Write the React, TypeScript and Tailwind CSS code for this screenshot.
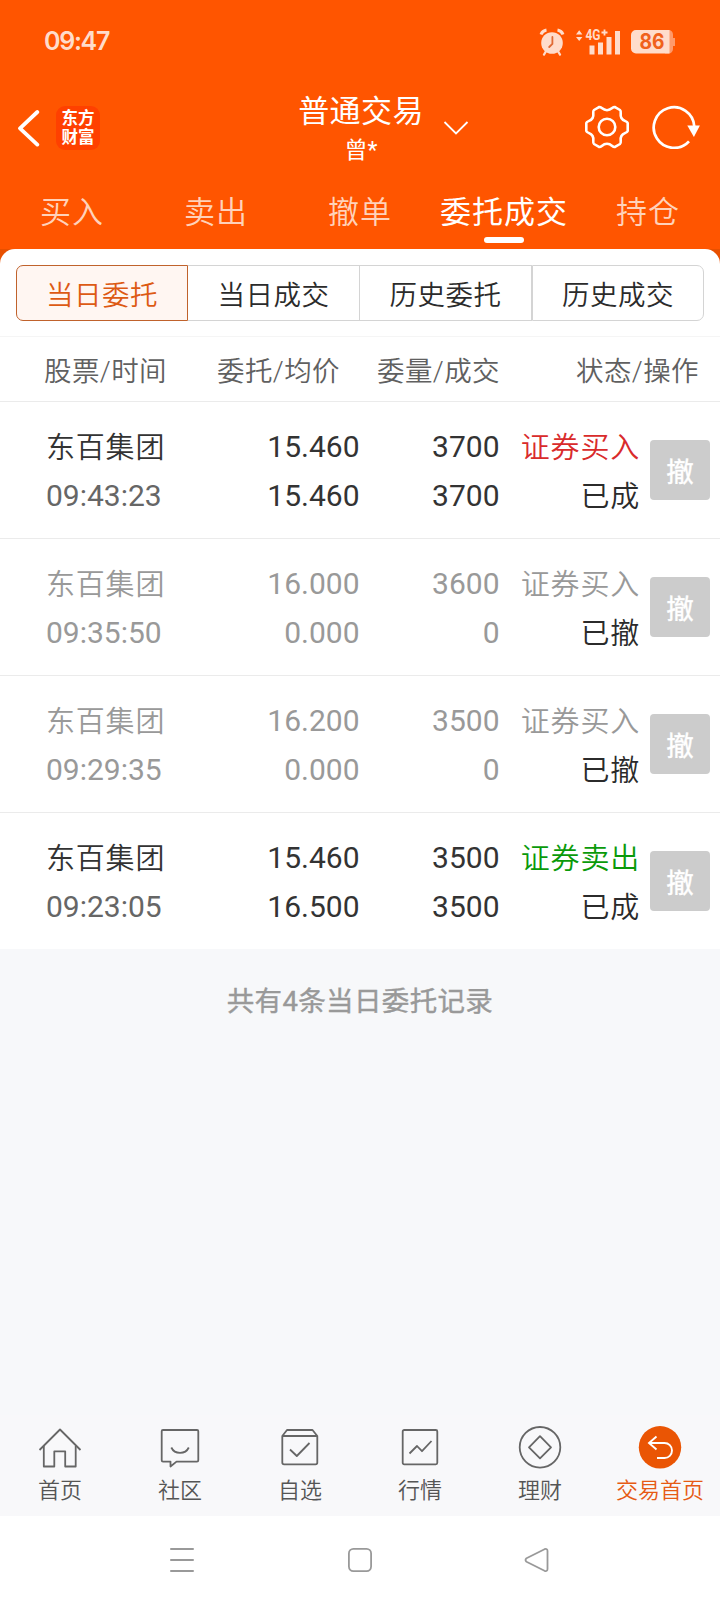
import React from "react";

const tabs = ["买入", "卖出", "撤单", "委托成交", "持仓"];
const segments = ["当日委托", "当日成交", "历史委托", "历史成交"];

type Order = {
  name: string;
  time: string;
  price: string;
  avg: string;
  qty: string;
  filled: string;
  side: string;
  sideClass: string;
  status: string;
  cancelled: boolean;
};

const orders: Order[] = [
  { name: "东百集团", time: "09:43:23", price: "15.460", avg: "15.460", qty: "3700", filled: "3700", side: "证券买入", sideClass: "text-[#d92b2b]", status: "已成", cancelled: false },
  { name: "东百集团", time: "09:35:50", price: "16.000", avg: "0.000", qty: "3600", filled: "0", side: "证券买入", sideClass: "text-[#999999]", status: "已撤", cancelled: true },
  { name: "东百集团", time: "09:29:35", price: "16.200", avg: "0.000", qty: "3500", filled: "0", side: "证券买入", sideClass: "text-[#999999]", status: "已撤", cancelled: true },
  { name: "东百集团", time: "09:23:05", price: "15.460", avg: "16.500", qty: "3500", filled: "3500", side: "证券卖出", sideClass: "text-[#0a9a0a]", status: "已成", cancelled: false },
];

function StatusBar() {
  return (
    <div className="flex h-[81px] items-center justify-between pl-[44px] pr-[45px] text-[#ffdccb]">
      <span className="font-[Inter] text-[25px] leading-[30px] font-semibold tracking-[-1.300px]">09:47</span>
      <div className="flex items-center pt-[2px]">
        <svg width="26" height="28" viewBox="0 0 26 28" className="mr-[10px]">
          <circle cx="13" cy="15" r="10.8" fill="currentColor" />
          <path d="M2 6.500a7 7 0 0 1 5.500-4.500M24 6.500a7 7 0 0 0-5.500-4.500" stroke="currentColor" strokeWidth="3" fill="none" />
          <path d="M6.5 24l-1.5 2.6M19.5 24l1.5 2.6" stroke="currentColor" strokeWidth="2.2" strokeLinecap="round" />
          <path d="M13.4 9v6.8l-3.2 3.2" stroke="#e06a35" strokeWidth="1.8" fill="none" strokeLinecap="round" />
        </svg>
        <svg width="46" height="28" viewBox="0 0 46 28" className="mr-[10px]">
          <path d="M1 6.500L4.200 2.300l3.200 4.200zM1 8.900L4.200 13.100 7.400 8.900z" fill="currentColor" />
          <text x="10.500" y="11.800" fontFamily="Roboto" fontSize="14" fontWeight="700" fill="currentColor" textLength="15" lengthAdjust="spacingAndGlyphs">4G</text>
          <path d="M26.500 4.500h6M29.500 1.500v6" stroke="currentColor" strokeWidth="1.800" />
          <path d="M14.500 17.500h5v9h-5zM23 14.500h5v12h-5zM31.500 9h5v17.500h-5zM40 3h5v23.500h-5z" fill="currentColor" />
        </svg>
        <svg width="44" height="24" viewBox="0 0 44 24">
          <path d="M34 0h3.500a4.500 4.500 0 0 1 4.500 4.500V8h2v8h-2v3a4.500 4.500 0 0 1-4.500 4.500H34z" fill="#ff9a6b" />
          <path d="M5 0h33.500v23.500H5a5 5 0 0 1-5-5V5a5 5 0 0 1 5-5z" fill="currentColor" />
          <text x="21" y="19.300" textAnchor="middle" fontFamily="Inter" fontSize="21" fontWeight="700" fill="#f0611b" textLength="25" lengthAdjust="spacingAndGlyphs">86</text>
        </svg>
      </div>
    </div>
  );
}

function TitleBar() {
  return (
    <div className="flex h-[97px] items-start pt-[9px]">
      <div className="flex w-[290px] items-center pt-[16px] pl-[17px]">
        <svg width="23" height="38" viewBox="0 0 23 38" fill="none" stroke="#fff" strokeWidth="3.800" strokeLinecap="round" strokeLinejoin="round">
          <path d="M20.300 3L3 19.300 20.300 35.600" />
        </svg>
        <div className="ml-[16px] flex size-[44px] items-center justify-center rounded-[9px] bg-[#ff4000] pb-[2px] font-['Noto_Sans_CJK_SC',sans-serif] text-[16.500px] leading-[19px] font-bold text-white">
          东方<br />财富
        </div>
      </div>
      <div className="flex w-[142px] flex-col items-center text-white">
        <span className="mt-[2px] text-[31px] leading-[40px] tracking-[0.400px] whitespace-nowrap">普通交易</span>
        <span className="mt-[2px] text-[23px] leading-[34px]">曾*</span>
      </div>
      <svg width="26" height="14" viewBox="0 0 26 14" fill="none" stroke="#fff" strokeWidth="1.800" className="mt-[31px] ml-[11px]">
        <path d="M1.500 1L13 12.500 24.500 1" />
      </svg>
      <div className="ml-auto flex items-center pt-[15px] pr-[19px]">
        <svg width="44" height="44" viewBox="0 0 44 44" fill="none" stroke="#fff" strokeWidth="2.600" strokeLinejoin="round" className="mr-[23px]">
          <path d="M14 2.100C16.500 1.300 17 5.200 22 5.200S27.500 1.300 30 2.100L35 5C37 6.500 34.400 9.400 36.400 13S42.200 15.700 42.700 18V26C42.200 28.300 38.400 27.400 36.400 31S37 37.500 35 39L30 41.900C27.500 42.700 27 38.800 22 38.800S16.500 42.700 14 41.900L9 39C7 37.500 9.600 34.600 7.600 31S1.800 28.300 1.300 26V18C1.800 15.700 5.600 16.600 7.600 13S7 6.500 9 5Z" />
          <circle cx="22" cy="22" r="8.300" />
        </svg>
        <svg width="49" height="44" viewBox="0 0 49 44" fill="none">
          <path d="M37 36.300A20.300 20.300 0 1 1 42.300 21.500" stroke="#fff" strokeWidth="2.700" />
          <path d="M35.300 20.500h12.600L41.900 32z" fill="#fff" />
        </svg>
      </div>
    </div>
  );
}

function HeaderTabs() {
  return (
    <div className="flex h-[71px] text-[31px] leading-[40px] tracking-[1px] text-[#ffd2ba]">
      {tabs.map((t) => {
        const active = t === "委托成交";
        return (
          <div key={t} className={active ? "flex w-[144px] flex-col items-center font-normal text-white" : "flex w-[144px] flex-col items-center font-[350]"}>
            <span className="mt-[15px] whitespace-nowrap">{t}</span>
            {active && <span className="mt-[4px] h-[6px] w-[40px] rounded-full bg-white" />}
          </div>
        );
      })}
    </div>
  );
}

function Segments() {
  return (
    <div className="flex h-[88px] border-b border-[#f5f5f5] px-[16px] pt-[16px]">
      <div className="flex h-[56px] w-[688px] text-[27.500px] leading-[40px] font-[350] tracking-[0.500px] text-[#2b2b2b]">
        {segments.map((s, i) => (
          <div
            key={s}
            className={
              i === 0
                ? "flex w-[172px] items-center justify-center rounded-l-[7px] border border-[#c0622c] bg-[#fff6f2] pt-[6px] text-[#dd5a14]"
                : i === 3
                  ? "flex w-[172px] items-center justify-center rounded-r-[7px] border border-[#d4d4d4] pt-[6px]"
                  : "flex w-[172px] items-center justify-center border-y border-r border-[#d4d4d4] pt-[6px]"
            }
          >
            {s}
          </div>
        ))}
      </div>
    </div>
  );
}

function ColumnHeads() {
  return (
    <div className="flex h-[65px] items-center border-b border-[#ebebeb] pt-[6px] text-[27.500px] leading-[40px] font-[350] tracking-[0.400px] whitespace-nowrap text-[#606060]">
      <span className="w-[172px] pl-[44px]">股票/时间</span>
      <span className="w-[168px] text-right">委托/均价</span>
      <span className="w-[160px] text-right">委量/成交</span>
      <span className="w-[199px] text-right">状态/操作</span>
    </div>
  );
}

function OrderRow({ o, last }: { o: Order; last: boolean }) {
  const main = o.cancelled ? "text-[#999999]" : "text-[#333333]";
  return (
    <div className={last ? "flex h-[136px] pt-[20px]" : "flex h-[137px] border-b border-[#ebebeb] pt-[20px]"}>
      <div className="flex w-[200px] flex-col pl-[46px] leading-[49px]">
        <span className={`h-[49px] pt-[2px] text-[29px] font-[350] tracking-[0.800px] ${main}`}>{o.name}</span>
        <span className={o.cancelled ? "h-[49px] text-[30px] text-[#999999]" : "h-[49px] text-[30px] text-[#666666]"}>{o.time}</span>
      </div>
      <div className={`flex w-[159.500px] flex-col text-right text-[30px] leading-[49px] ${main}`}>
        <span className="h-[49px]">{o.price}</span>
        <span className="h-[49px]">{o.avg}</span>
      </div>
      <div className={`flex w-[140px] flex-col text-right text-[30px] leading-[49px] ${main}`}>
        <span className="h-[49px]">{o.qty}</span>
        <span className="h-[49px]">{o.filled}</span>
      </div>
      <div className="flex w-[140.500px] flex-col pt-[2px] text-right text-[29px] leading-[49px] font-[350] tracking-[0.800px]">
        <span className={`h-[49px] ${o.sideClass}`}>{o.side}</span>
        <span className="h-[49px] text-[#2b2b2b]">{o.status}</span>
      </div>
      <button className="mt-[18px] ml-[10px] flex size-[60px] items-center justify-center rounded-[4px] bg-[#cccccc] pt-[6px] text-[27.500px] leading-[40px] text-white [-webkit-text-stroke:0.400px_white]">撤</button>
    </div>
  );
}

const line = { fill: "none", stroke: "#666666", strokeWidth: 1.8, strokeLinejoin: "round" as const };

const navItems = [
  {
    label: "首页",
    icon: (
      <g {...line}>
        <path d="M1.500 24L22 3.500 42.500 24" />
        <path d="M5.800 20v20.500h10.500V25.300h10.900v15.200h10.500V20" />
      </g>
    ),
  },
  {
    label: "社区",
    icon: (
      <g {...line}>
        <path d="M5 4h34a1.300 1.300 0 0 1 1.300 1.300v29a1.300 1.300 0 0 1-1.300 1.300H18.500L12.500 40.500V35.600H5a1.300 1.300 0 0 1-1.300-1.300v-29A1.300 1.300 0 0 1 5 4z" />
        <path d="M13.300 21.500c3.500 7.200 14 7.200 17.500 0" />
      </g>
    ),
  },
  {
    label: "自选",
    icon: (
      <g {...line}>
        <path d="M4.300 10L9 4h25.500l4.800 6v26.500a1.800 1.800 0 0 1-1.800 1.800H6.100a1.800 1.800 0 0 1-1.800-1.800zM4.300 10h35" />
        <path d="M12 23.500l6.800 6.500L31.500 17" />
      </g>
    ),
  },
  {
    label: "行情",
    icon: (
      <g {...line}>
        <rect x="4.700" y="4" width="34.600" height="34.300" rx="1.500" />
        <path d="M11.500 27.500l7.500-7.500 5 5.200 9.500-10.200" />
      </g>
    ),
  },
  {
    label: "理财",
    icon: (
      <g {...line}>
        <circle cx="22" cy="21.300" r="20.300" />
        <path d="M22 10.200L33 21.300 22 32.400 11 21.300z" />
      </g>
    ),
  },
  {
    label: "交易首页",
    icon: (
      <g>
        <circle cx="22" cy="21.300" r="21.200" fill="#ea5504" />
        <path d="M18.500 10.500L11 17 18.500 23.500M11 17H26.500a7.500 7.500 0 0 1 0 15H19" fill="none" stroke="#fff" strokeWidth="1.900" />
      </g>
    ),
  },
];

function BottomNav() {
  return (
    <div className="flex h-[101px] bg-[#f8f8fa] pt-[11px]">
      {navItems.map((n, i) => (
        <div key={n.label} className="flex w-[120px] flex-col items-center font-[350]">
          <svg width="44" height="44" viewBox="0 0 44 44">{n.icon}</svg>
          <span className={i === 5 ? "mt-[6px] text-[22px] leading-[30px] text-[#e65a14]" : "mt-[6px] text-[22px] leading-[30px] text-[#555555]"}>{n.label}</span>
        </div>
      ))}
    </div>
  );
}

function SystemNav() {
  return (
    <div className="flex h-[88px] items-center bg-white">
      <svg width="26" height="26" viewBox="0 0 26 26" className="ml-[169px]" stroke="#999999" strokeWidth="2" strokeLinecap="round">
        <path d="M2 2h22M2 13h22M2 24h22" />
      </svg>
      <svg width="26" height="26" viewBox="0 0 26 26" className="ml-[152px]" fill="none" stroke="#999999" strokeWidth="1.800">
        <rect x="1.900" y="1.900" width="22.200" height="22.200" rx="4.500" />
      </svg>
      <svg width="26" height="26" viewBox="0 0 26 26" className="ml-[151px]" fill="none" stroke="#999999" strokeWidth="1.800" strokeLinejoin="round">
        <path d="M2.500 11.300L20.500 2.200Q23.500 1.300 23.500 4v18q0 2.700-3 1.800L2.500 14.700Q.5 13 2.500 11.300z" />
      </svg>
    </div>
  );
}

export default function App() {
  return (
    <div className="flex h-[1604px] w-[720px] flex-col bg-[#f7f8fa] font-[Roboto,'Noto_Sans_CJK_SC',sans-serif] font-normal">
      <header className="h-[249px] bg-[#ff5500]">
        <StatusBar />
        <TitleBar />
        <HeaderTabs />
      </header>
      <div className="bg-[#e85000]">
        <main className="rounded-t-[15px] bg-white">
          <Segments />
          <ColumnHeads />
          {orders.map((o, i) => (
            <OrderRow key={o.time} o={o} last={i === orders.length - 1} />
          ))}
        </main>
      </div>
      <div className="flex-1 pt-[32px] text-center text-[27.500px] leading-[42px] tracking-[0.350px] text-[#999999] [-webkit-text-stroke:0.400px_#999999]">共有4条当日委托记录</div>
      <BottomNav />
      <SystemNav />
    </div>
  );
}
